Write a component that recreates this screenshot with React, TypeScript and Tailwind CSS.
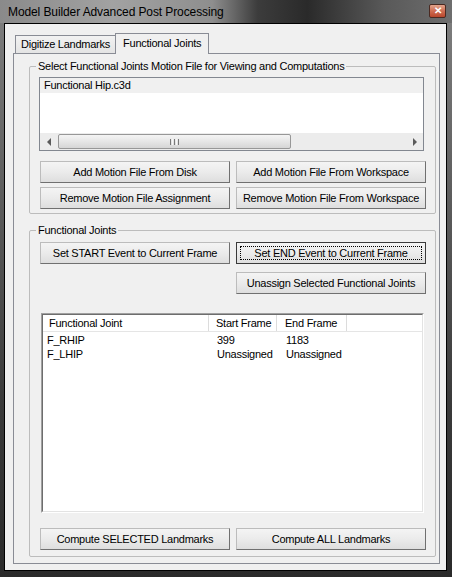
import type { ReactNode } from "react";

type BtnProps = {
  children: ReactNode;
  className?: string;
  focused?: boolean;
};

// Win7-ish push button
function Btn({ children, className = "", focused = false }: BtnProps) {
  return (
    <div
      className={`relative h-[22px] flex items-center justify-center bg-[linear-gradient(180deg,#f4f4f4_0%,#ebebeb_50%,#dedede_100%)] border ${
        focused
          ? "border-[#3a3a3a]"
          : "border-[#bcbcbc] border-r-[#707070] border-b-[#707070]"
      } ${className}`}
    >
      {focused && (
        <div className="absolute inset-[3px] border border-dotted border-black" />
      )}
      <span className="whitespace-nowrap">{children}</span>
    </div>
  );
}

function Arrow({ dir }: { dir: "left" | "right" }) {
  return dir === "left" ? (
    <div className="w-0 h-0 border-y-[4px] border-y-transparent border-r-[4px] border-r-[#5a5a5a]" />
  ) : (
    <div className="w-0 h-0 border-y-[4px] border-y-transparent border-l-[4px] border-l-[#5a5a5a]" />
  );
}

const joints = [
  { name: "F_RHIP", start: "399", end: "1183" },
  { name: "F_LHIP", start: "Unassigned", end: "Unassigned" },
];

export default function App() {
  return (
    <div className="w-[452px] h-[577px] flex flex-col bg-[linear-gradient(180deg,#808080_0%,#5c5c5c_35%,#3a3a3a_70%,#2a2a2a_100%)] font-['Liberation_Sans',Arial,sans-serif] text-[11px] leading-[13px] tracking-[-0.25px] text-black">
      {/* Title bar */}
      <div className="h-[23px] flex items-start justify-between pl-[8px] pr-[6px] bg-[linear-gradient(90deg,#8a8a8a_0%,#a2a2a2_25%,#8e8e8e_47%,#3c3c3c_57%,#2a2a2a_68%,#595959_85%,#6e6e6e_100%)]">
        <span className="mt-[5px] text-[12px] leading-[14px] tracking-[-0.1px]">
          Model Builder Advanced Post Processing
        </span>
        <div className="mt-[4px] w-[17px] h-[14px] rounded-[2px] border border-[#4a2a22] bg-[linear-gradient(180deg,#e3a48c_0%,#cf6d52_50%,#b9472c_100%)] flex items-center justify-center text-white text-[10px] leading-none font-bold">
          ✕
        </div>
      </div>

      {/* Frame + client */}
      <div className="flex-1 flex flex-col pl-[4px] pr-[5px] pb-[6px]">
        <div className="flex-1 flex flex-col border border-black bg-[#f0f0f0] pl-[8px] pr-[6px] pt-[9px] pb-[6px]">
          {/* Tabs */}
          <div className="relative z-10 flex items-end h-[21px] -mb-px pl-[2px]">
            <div className="h-[18px] mb-px px-[5px] flex items-center border border-b-0 border-[#898c95] bg-[linear-gradient(180deg,#f2f2f2,#e4e4e4)]">
              Digitize Landmarks
            </div>
            <div className="h-[21px] -ml-px px-[7px] pb-[2px] flex items-center border border-b-0 border-[#898c95] bg-[#f0f0f0]">
              Functional Joints
            </div>
          </div>

          {/* Tab panel */}
          <div className="flex-1 flex flex-col border border-[#898c95] pl-[15px] pr-[5px] pt-[6px] pb-[6px]">
            {/* Group 1 */}
            <fieldset className="border border-[#bcbcbc] rounded-[2px]">
              <legend className="ml-[6px] px-[2px]">
                Select Functional Joints Motion File for Viewing and Computations
              </legend>
              <div className="px-[9px] pt-[4px] pb-[4px]">
                {/* Listbox */}
                <div className="w-[385px] h-[74px] flex flex-col border border-[#828790] bg-white">
                  <div className="flex-1">
                    <div className="h-[15px] pl-[4px] flex items-center bg-[#f0f0f0]">
                      Functional Hip.c3d
                    </div>
                  </div>
                  <div className="h-[17px] flex bg-[#ececec]">
                    <div className="w-[17px] flex items-center justify-center">
                      <Arrow dir="left" />
                    </div>
                    <div className="flex-1 flex items-center pl-px">
                      <div className="w-[233px] h-[15px] rounded-[2px] border border-[#979797] bg-[linear-gradient(180deg,#f4f4f4_0%,#e6e6e6_50%,#d6d6d6_100%)] flex items-center justify-center gap-[1px]">
                        <div className="w-px h-[6px] bg-[#7a7a7a]" />
                        <div className="w-px h-[6px] bg-[#f8f8f8]" />
                        <div className="w-px h-[6px] bg-[#7a7a7a]" />
                        <div className="w-px h-[6px] bg-[#f8f8f8]" />
                        <div className="w-px h-[6px] bg-[#7a7a7a]" />
                      </div>
                    </div>
                    <div className="w-[17px] flex items-center justify-center">
                      <Arrow dir="right" />
                    </div>
                  </div>
                </div>

                <div className="mt-[10px] ml-px grid grid-cols-[190px_190px] gap-x-[6px] gap-y-[4px]">
                  <Btn>Add Motion File From Disk</Btn>
                  <Btn>Add Motion File From Workspace</Btn>
                  <Btn>Remove Motion File Assignment</Btn>
                  <Btn>Remove Motion File From Workspace</Btn>
                </div>
              </div>
            </fieldset>

            {/* Group 2 */}
            <fieldset className="mt-[10px] flex-1 flex flex-col border border-[#bcbcbc] rounded-[2px]">
              <legend className="ml-[6px] px-[2px]">Functional Joints</legend>
              <div className="flex-1 flex flex-col px-[9px] pt-[5px] pb-[6px]">
                <div className="ml-px grid grid-cols-[190px_190px] gap-x-[6px]">
                  <Btn>Set START Event to Current Frame</Btn>
                  <Btn focused>Set END Event to Current Frame</Btn>
                </div>
                <div className="mt-[8px] ml-px grid grid-cols-[190px_190px] gap-x-[6px]">
                  <div />
                  <Btn>Unassign Selected Functional Joints</Btn>
                </div>

                {/* List view */}
                <div className="mt-[19px] ml-[2px] w-[383px] flex-1 flex flex-col border border-t-[#a0a0a0] border-l-[#a0a0a0] border-r-white border-b-white">
                  <div className="flex-1 flex flex-col border border-t-[#6d6d6d] border-l-[#6d6d6d] border-r-[#e3e3e3] border-b-[#e3e3e3] bg-white">
                    <div className="h-[17px] flex border-b border-[#e5e5e5]">
                      <div className="w-[166px] pl-[6px] flex items-center border-r border-[#dcdcdc]">
                        Functional Joint
                      </div>
                      <div className="w-[68px] pl-[7px] flex items-center border-r border-[#dcdcdc]">
                        Start Frame
                      </div>
                      <div className="w-[70px] pl-[8px] flex items-center border-r border-[#dcdcdc]">
                        End Frame
                      </div>
                    </div>
                    <div className="pt-[1px]">
                      {joints.map((j) => (
                        <div key={j.name} className="h-[14px] flex items-center">
                          <div className="w-[166px] pl-[4px]">{j.name}</div>
                          <div className="w-[68px] pl-[8px]">{j.start}</div>
                          <div className="w-[70px] pl-[9px]">{j.end}</div>
                        </div>
                      ))}
                    </div>
                  </div>
                </div>

                <div className="mt-[15px] ml-px grid grid-cols-[190px_190px] gap-x-[6px]">
                  <Btn>Compute SELECTED Landmarks</Btn>
                  <Btn>Compute ALL Landmarks</Btn>
                </div>
              </div>
            </fieldset>
          </div>
        </div>
      </div>
    </div>
  );
}
